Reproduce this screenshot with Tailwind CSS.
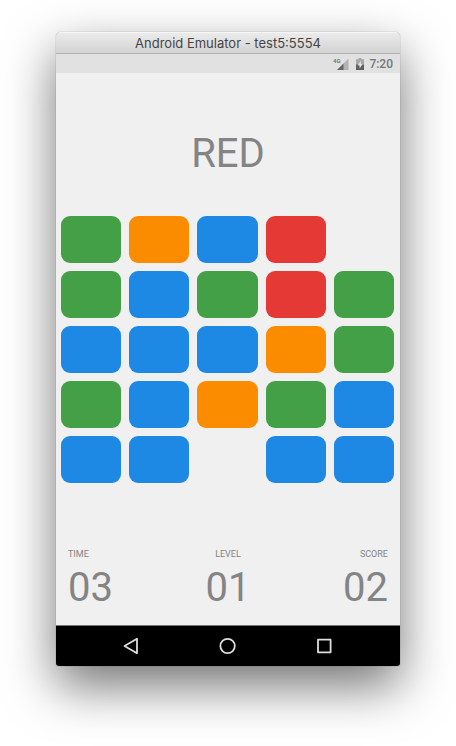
<!DOCTYPE html>
<html lang="en">
<head>
<meta charset="utf-8">
<meta name="viewport" content="width=device-width, initial-scale=1">
<title>Android Emulator - test5:5554</title>
<script src="https://cdn.jsdelivr.net/npm/@tailwindcss/browser@4"></script>
</head>
<body class="bg-white px-14 pt-8 pb-20 font-[Roboto,sans-serif] text-[#848484]">
<div class="overflow-hidden rounded-t-[5px] rounded-b-[3px] bg-[#f0f0f0] shadow-[0_0_1px_rgba(0,0,0,0.55),0_20px_50px_rgba(0,0,0,0.55)]">
  <header class="flex h-[22px] items-center justify-center border-t border-b border-t-[#f6f6f6] border-b-[#b0b0b0] bg-linear-to-b from-[#ebebeb] to-[#d3d3d3]">
    <h1 class="font-[Inter,sans-serif] text-[13px] leading-5 text-[#454545]">Android Emulator - test5:5554</h1>
  </header>

  <div class="flex h-[19px] items-center justify-end bg-[#e1e1e1] pr-[7px] text-[#757575]">
    <svg class="mr-[7px] h-4 w-[16px]" viewBox="0 0 16 16" role="img" aria-label="4G signal">
      <path d="M15.500 2.500V14H4Z" fill="#b3b3b3"/>
      <path d="M10.500 7.500V14H4Z" fill="#666"/>
      <text x="0" y="7" font-family="Roboto, sans-serif" font-size="6" font-weight="700" fill="#757575">4G</text>
    </svg>
    <svg class="mr-[5px] h-4 w-[8px]" viewBox="0 0 8 16" role="img" aria-label="Battery charging">
      <path d="M2.500 2h3v1.200H8V14H0V3.200h2.500Z" fill="#a8a8a8"/>
      <path d="M0 8.500h8V14H0Z" fill="#606060"/>
      <path d="M4.800 4.800 1.700 9.400h1.900v3l3-4.500H4.800Z" fill="#e6e6e6"/>
    </svg>
    <time class="text-[12px] leading-4 font-medium">7:20</time>
  </div>

  <main>
    <h2 class="pt-[57px] text-center text-[40px] leading-12">RED</h2>

    <div class="mt-[38px] grid grid-cols-5 gap-2 pr-[6px] pl-[5px]">
      <button aria-label="Green" class="h-[47px] rounded-[9px] bg-[#43a047]"></button>
      <button aria-label="Orange" class="h-[47px] rounded-[9px] bg-[#fb8c00]"></button>
      <button aria-label="Blue" class="h-[47px] rounded-[9px] bg-[#1e88e5]"></button>
      <button aria-label="Red" class="h-[47px] rounded-[9px] bg-[#e53935]"></button>
      <span></span>

      <button aria-label="Green" class="h-[47px] rounded-[9px] bg-[#43a047]"></button>
      <button aria-label="Blue" class="h-[47px] rounded-[9px] bg-[#1e88e5]"></button>
      <button aria-label="Green" class="h-[47px] rounded-[9px] bg-[#43a047]"></button>
      <button aria-label="Red" class="h-[47px] rounded-[9px] bg-[#e53935]"></button>
      <button aria-label="Green" class="h-[47px] rounded-[9px] bg-[#43a047]"></button>

      <button aria-label="Blue" class="h-[47px] rounded-[9px] bg-[#1e88e5]"></button>
      <button aria-label="Blue" class="h-[47px] rounded-[9px] bg-[#1e88e5]"></button>
      <button aria-label="Blue" class="h-[47px] rounded-[9px] bg-[#1e88e5]"></button>
      <button aria-label="Orange" class="h-[47px] rounded-[9px] bg-[#fb8c00]"></button>
      <button aria-label="Green" class="h-[47px] rounded-[9px] bg-[#43a047]"></button>

      <button aria-label="Green" class="h-[47px] rounded-[9px] bg-[#43a047]"></button>
      <button aria-label="Blue" class="h-[47px] rounded-[9px] bg-[#1e88e5]"></button>
      <button aria-label="Orange" class="h-[47px] rounded-[9px] bg-[#fb8c00]"></button>
      <button aria-label="Green" class="h-[47px] rounded-[9px] bg-[#43a047]"></button>
      <button aria-label="Blue" class="h-[47px] rounded-[9px] bg-[#1e88e5]"></button>

      <button aria-label="Blue" class="h-[47px] rounded-[9px] bg-[#1e88e5]"></button>
      <button aria-label="Blue" class="h-[47px] rounded-[9px] bg-[#1e88e5]"></button>
      <span></span>
      <button aria-label="Blue" class="h-[47px] rounded-[9px] bg-[#1e88e5]"></button>
      <button aria-label="Blue" class="h-[47px] rounded-[9px] bg-[#1e88e5]"></button>
    </div>

    <dl class="mt-[65px] grid grid-cols-3 px-3 pb-[13px]">
      <div>
        <dt class="text-[9px] leading-3">TIME</dt>
        <dd class="mt-1 text-[40px] leading-12">03</dd>
      </div>
      <div class="text-center">
        <dt class="text-[9px] leading-3">LEVEL</dt>
        <dd class="mt-1 text-[40px] leading-12">01</dd>
      </div>
      <div class="text-right">
        <dt class="text-[9px] leading-3">SCORE</dt>
        <dd class="mt-1 text-[40px] leading-12">02</dd>
      </div>
    </dl>
  </main>

  <nav class="flex h-[41px] items-center justify-center gap-[72px] border-t border-[#777] bg-black">
    <button aria-label="Back" class="size-6"><svg class="size-6" viewBox="0 0 24 24" fill="none" stroke="#dedede" stroke-width="1.800" stroke-linejoin="round"><path d="M17 4.800V19.200L4.500 12Z"/></svg></button>
    <button aria-label="Home" class="size-6"><svg class="size-6" viewBox="0 0 24 24" fill="none" stroke="#dedede" stroke-width="1.800"><circle cx="11.600" cy="12" r="7.200"/></svg></button>
    <button aria-label="Overview" class="size-6"><svg class="size-6" viewBox="0 0 24 24" fill="none" stroke="#dedede" stroke-width="1.800" stroke-linejoin="round"><rect x="6" y="5.700" width="12.600" height="12.600"/></svg></button>
  </nav>
</div>
</body>
</html>
